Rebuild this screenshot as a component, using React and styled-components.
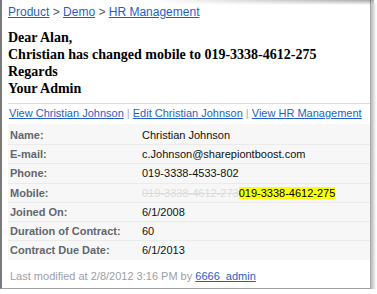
import React from 'react';
import styled, { createGlobalStyle } from 'styled-components';

const Global = createGlobalStyle`
  body {
    margin: 0;
    background: #fff;
    font-family: "Liberation Sans", Arial, sans-serif;
  }
`;

const Frame = styled.div`
  position: relative;
  width: 368px;
  height: 288px;
  border-left: 2px solid #7a7a7a;
  border-right: 1px solid #a8a8a8;
  border-bottom: 1px solid #a0a0a0;
  box-shadow: 3px 3px 3px rgba(0, 0, 0, 0.25);
  background: #fff;
  display: flex;
  flex-direction: column;

  &::before {
    content: "";
    position: absolute;
    top: 0;
    left: 150px;
    right: -4px;
    height: 5px;
    background: linear-gradient(to bottom, rgba(0,0,0,0.35), rgba(0,0,0,0));
    -webkit-mask: linear-gradient(to right, transparent, #000);
    mask: linear-gradient(to right, transparent, #000);
  }
`;

const Crumbs = styled.div`
  padding: 5px 0 0 6px;
  font-size: 12px;
  line-height: 14px;
  color: #555;
  a { color: #1f5fc4; }
`;

const Mail = styled.div`
  padding: 10px 0 6px 6px;
  font-family: "Liberation Serif", "Times New Roman", serif;
  font-weight: bold;
  font-size: 14px;
  line-height: 17px;
  color: #000;
`;

const Links = styled.div`
  border-top: 1px solid #dcdcdc;
  margin-left: 6px;
  height: 21px;
  padding: 3px 0 0 1px;
  box-sizing: border-box;
  font-size: 11px;
  line-height: 13px;
  color: #aaa;
  white-space: nowrap;
  a { color: #1f5fc4; }
`;

const Table = styled.div`
  margin-left: 6px;
  background: #f7f7f7;
  padding: 2px 0 1px;
`;

const Row = styled.div`
  display: grid;
  grid-template-columns: 132px 1fr;
  height: 18.2px;
  align-items: center;
  border-bottom: 1px solid #ebebeb;
  font-size: 11px;
  padding-left: 2px;
  &:last-child { border-bottom: none; }
`;

const Label = styled.div`
  color: #62666e;
  font-weight: bold;
`;

const Value = styled.div`
  color: #111;
`;

const Old = styled.span`
  color: #dcdcdc;
  text-decoration: line-through;
`;

const New = styled.span`
  background: #ffff00;
  color: #000;
`;

const Footer = styled.div`
  margin-left: 6px;
  padding: 10px 0 0 2px;
  font-size: 11px;
  line-height: 13px;
  color: #9aa0a8;
  a { color: #1f5fc4; }
`;

const rows = [
  ['Name:', 'Christian Johnson'],
  ['E-mail:', 'c.Johnson@sharepiontboost.com'],
  ['Phone:', '019-3338-4533-802'],
  ['Mobile:', null],
  ['Joined On:', '6/1/2008'],
  ['Duration of Contract:', '60'],
  ['Contract Due Date:', '6/1/2013'],
];

export default function App() {
  return (
    <>
      <Global />
      <Frame>
        <Crumbs>
          <a href="#">Product</a> &gt; <a href="#">Demo</a> &gt; <a href="#">HR Management</a>
        </Crumbs>
        <Mail>
          Dear Alan,<br />
          Christian has changed mobile to 019-3338-4612-275<br />
          Regards<br />
          Your Admin
        </Mail>
        <Links>
          <a href="#">View Christian Johnson</a> | <a href="#">Edit Christian Johnson</a> | <a href="#">View HR Management</a>
        </Links>
        <Table>
          {rows.map(([label, value]) => (
            <Row key={label}>
              <Label>{label}</Label>
              <Value>
                {value !== null ? value : (
                  <>
                    <Old>019-3338-4612-273</Old>
                    <New>019-3338-4612-275</New>
                  </>
                )}
              </Value>
            </Row>
          ))}
        </Table>
        <Footer>
          Last modified at 2/8/2012 3:16 PM by <a href="#">6666_admin</a>
        </Footer>
      </Frame>
    </>
  );
}
